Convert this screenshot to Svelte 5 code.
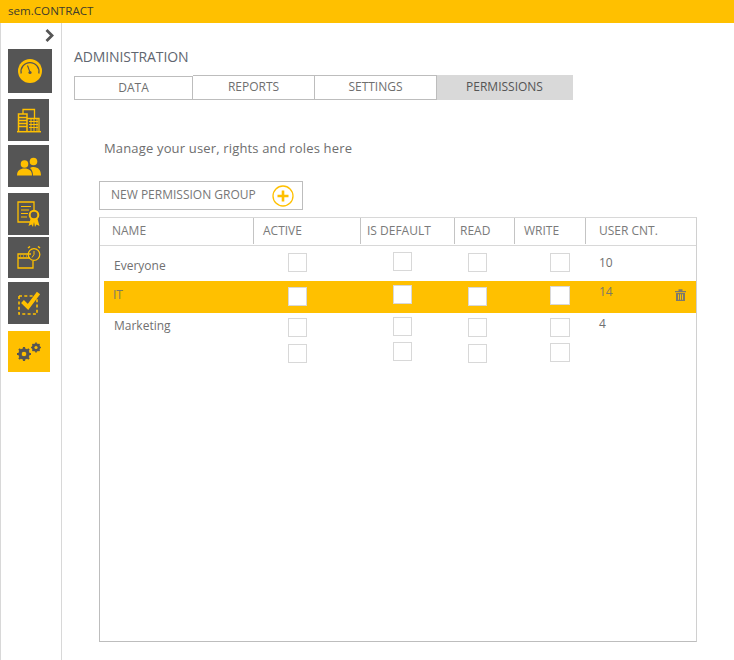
<script>
  const rows = [
    { name: 'Everyone', count: '10', cls: 'r1' },
    { name: 'IT', count: '14', cls: 'r2 selected' },
    { name: 'Marketing', count: '4', cls: 'r3' },
    { name: '', count: '', cls: 'r4' },
  ];
  const heads = ['NAME', 'ACTIVE', 'IS DEFAULT', 'READ', 'WRITE', 'USER CNT.'];
  const tabs = ['DATA', 'REPORTS', 'SETTINGS', 'PERMISSIONS'];
</script>

<div class="topbar">sem.CONTRACT</div>
<div class="page">
  <nav class="side">
    <svg class="chevron" width="10" height="13" viewBox="0 0 10 13"><path d="M1.5 1l5.500 5.500L1.500 12" fill="none" stroke="#555" stroke-width="2.800"/></svg>

    <div class="tile t1">
      <svg width="24" height="24" viewBox="0 0 24 24">
        <circle cx="12" cy="12" r="12" fill="#ffc000"/>
        <path d="M3.200 14.500a9 9 0 1 1 17.600 0" fill="none" stroke="#555" stroke-width="1.300"/>
        <path d="M9.500 6.500l2.400 6.500" stroke="#555" stroke-width="1.100"/>
        <circle cx="12" cy="13.500" r="1.600" fill="#555"/>
      </svg>
    </div>

    <div class="tile t2">
      <svg width="24" height="25" viewBox="0 0 24 25" fill="none" stroke="#ffc000" stroke-width="1.300">
        <path d="M1.500 23V6h8.500v17M1.500 9.500H10M1.500 12.500H10M1.500 15.500H10M1.500 18.500H10" stroke-width="1.500"/>
        <path d="M10 10.500h12v12.500"/>
        <path d="M12 13.500h9M12 16.500h9M12 19.500h9M14 11v12M17 11v12M20 11v12" stroke-width="1"/>
        <path d="M6 6V1.500h11.500v9"/>
        <path d="M0 23.700h24" stroke-width="1.500"/>
      </svg>
    </div>

    <div class="tile t3">
      <svg width="24" height="19" viewBox="0 0 24 19" fill="#ffc000">
        <circle cx="7.500" cy="7" r="3.800"/>
        <circle cx="16.500" cy="4.500" r="3.800"/>
        <path d="M0 18.500c0-5 3-7 7.500-7s7.500 2 7.500 7z"/>
        <path d="M16 18.500h8c0-5-2.500-8.500-7.500-8.500-1.500 0-3 .5-3.500 1 1.800 1.500 3 4 3 7.500z"/>
      </svg>
    </div>

    <div class="tile t4">
      <svg width="24" height="27" viewBox="0 0 24 27" fill="none" stroke="#ffc000" stroke-width="1.300">
        <path d="M14 21H1V1h16v9"/>
        <path d="M4 5.500h10M4 9h8M4 12.500h7M4 16h6" stroke-width="1.100"/>
        <circle cx="17" cy="14" r="4.300" stroke-width="2"/>
        <path d="M13.500 18l-2 7 3-1.500 1.500 2.500 1-5 1 5 1.500-2.500 3 1.500-2-7z" fill="#ffc000" stroke="none"/>
      </svg>
    </div>

    <div class="tile t5">
      <svg width="24" height="24" viewBox="0 0 24 24" fill="none" stroke="#ffc000" stroke-width="1.300">
        <path d="M14 8H1v14h15v-7"/>
        <path d="M1 12h12" stroke-width="1.600"/>
        <path d="M3 10h1M6 10h1M9 10h1" stroke-width="1.200"/>
        <circle cx="17" cy="8.500" r="5.800"/>
        <path d="M17 5v3.500l-2 3" stroke-width="1"/>
        <path d="M11 2l2-1.500M23 2l-2-1.500" stroke-width="1.500"/>
      </svg>
    </div>

    <div class="tile t6">
      <svg width="24" height="24" viewBox="0 0 24 24" fill="none">
        <path d="M2 5h18v18H2z" stroke="#ffc000" stroke-width="1.600" stroke-dasharray="3 2.300"/>
        <path d="M5.500 10.500l5.500 5.500L21.500 2" stroke="#ffc000" stroke-width="4"/>
      </svg>
    </div>

    <div class="tile t7">
      <svg width="26" height="20" viewBox="0 0 26 20">
        <g fill="none" stroke="#555">
          <circle cx="8" cy="12" r="4.300" stroke-width="2.800"/>
          <path d="M8 5v14M1 12h14M3 7l10 10M13 7L3 17" stroke-width="2.200"/>
          <circle cx="20" cy="5.500" r="3" stroke-width="2.200"/>
          <path d="M20 .5v10M15 5.500h10M16.500 2l7 7M23.500 2l-7 7" stroke-width="1.600"/>
        </g>
        <circle cx="8" cy="12" r="2.300" fill="#ffc000"/>
        <circle cx="20" cy="5.500" r="1.600" fill="#ffc000"/>
      </svg>
    </div>
  </nav>

  <main class="content">
    <h1>ADMINISTRATION</h1>
    <div class="tabs">
      {#each tabs as tab, i}
        <div class="tab tab{i}" class:active={i === 3}>{tab}</div>
      {/each}
    </div>

    <p class="intro">Manage your user, rights and roles here</p>

    <button class="newgroup">
      <span>NEW PERMISSION GROUP</span>
      <svg width="22" height="22" viewBox="0 0 22 22">
        <circle cx="11" cy="11" r="10" fill="#fff" stroke="#ffc000" stroke-width="1.300"/>
        <path d="M11 5.500v11M5.500 11h11" stroke="#ffc000" stroke-width="2.600"/>
      </svg>
    </button>

    <div class="table">
      <div class="thead">
        {#each heads as h}
          <div class="th">{h}</div>
        {/each}
      </div>
      {#each rows as row}
        <div class="row {row.cls}">
          <div class="name">{row.name}</div>
          <div class="cell"><span class="box"></span></div>
          <div class="cell"><span class="box"></span></div>
          <div class="cell"><span class="box"></span></div>
          <div class="cell"><span class="box"></span></div>
          <div class="count">{row.count}</div>
          {#if row.name === 'IT'}
            <svg class="trash" width="11" height="12" viewBox="0 0 11 12" fill="#7f7a6a">
              <path d="M0 2h11v1.300H0zM3.500.3h4V2h-4z"/>
              <path fill-rule="evenodd" d="M1 4h9v8H1zM3 5.200v5.600h1V5.200zM5 5.200v5.600h1V5.200zM7 5.200v5.600h1V5.200z"/>
            </svg>
          {/if}
        </div>
      {/each}
    </div>
  </main>
</div>

<style>
  :global(body) {
    margin: 0;
    background: #fff;
    font-family: "Open Sans", "Liberation Sans", sans-serif;
    color: #6b6b6b;
  }
  .topbar {
    height: 23px;
    background: #ffc000;
    color: #403c2c;
    font-size: 11.6px;
    line-height: 22px;
    padding-left: 8px;
  }
  .page {
    display: flex;
    height: 637px;
  }
  .side {
    box-sizing: border-box;
    width: 62px;
    flex-shrink: 0;
    border-left: 1px solid #d8d8d8;
    border-right: 1px solid #d8d8d8;
    padding: 6px 0 0 7px;
    display: flex;
    flex-direction: column;
    align-items: flex-start;
  }
  .chevron { margin: 0 0 7px 37px; height: 13px; }
  .tile {
    background: #555;
    display: flex;
    align-items: center;
    justify-content: center;
    width: 41px;
    height: 42px;
  }
  .t1 { width: 44px; height: 44px; }
  .t2 { margin-top: 6px; }
  .t3 { margin-top: 4px; }
  .t4 { margin-top: 6px; }
  .t5 { margin-top: 2px; height: 41px; }
  .t6 { margin-top: 4px; }
  .t7 { margin-top: 7px; width: 42px; height: 41px; background: #ffc000; }

  .content { padding-left: 12px; flex: 1; min-width: 0; }
  h1 {
    margin: 0;
    padding-top: 23px;
    font-size: 14px;
    font-weight: 400;
    line-height: 21px;
    color: #5f6670;
    letter-spacing: -0.1px;
  }
  .tabs { display: flex; margin-top: 8px; align-items: flex-end; }
  .tab {
    box-sizing: border-box;
    height: 25px;
    border: 1px solid #bdbdbd;
    border-left-width: 0;
    font-size: 12px;
    line-height: 22px;
    text-align: center;
    color: #6f6f6f;
    background: #fff;
  }
  .tab0 { width: 119px; height: 24px; border-left-width: 1px; }
  .tab1 { width: 122px; }
  .tab2 { width: 122px; }
  .tab3 { width: 136px; }
  .tab.active { background: #d9d9d9; border-color: #d9d9d9; color: #555; }

  .intro {
    margin: 38px 0 0 30px;
    font-size: 13px;
    line-height: 20px;
    color: #6e6e6e;
    letter-spacing: 0.16px;
  }
  .newgroup {
    box-sizing: border-box;
    display: flex;
    align-items: center;
    justify-content: space-between;
    width: 204px;
    height: 29px;
    margin: 23px 0 0 25px;
    padding: 0 8px 0 11px;
    background: #fff;
    border: 1px solid #bdbdbd;
    font-family: inherit;
    font-size: 12px;
    color: #777;
  }
  .newgroup span { margin-top: -2px; }
  .table {
    box-sizing: border-box;
    width: 598px;
    height: 425px;
    margin: 7px 0 0 25px;
    border: 1px solid #bdbdbd;
    border-top-color: #d8d8d8;
    border-right-color: #d0d0d0;
  }
  .thead {
    display: grid;
    grid-template-columns: 154px 107px 94px 60px 71px 1fr;
    height: 28px;
    border-bottom: 1px solid #d8d8d8;
    box-sizing: border-box;
  }
  .th {
    box-sizing: border-box;
    padding-left: 12px;
    font-size: 12px;
    line-height: 26px;
    color: #7a7a7a;
    border-right: 1px solid #c4c4c4;
    height: 26px;
  }
  .th:nth-child(2) { padding-left: 9px; }
  .th:nth-child(3) { padding-left: 6px; }
  .th:nth-child(4) { padding-left: 5px; }
  .th:nth-child(5) { padding-left: 9px; }
  .th:nth-child(6) { padding-left: 13px; border-right: 0; }

  .row {
    position: relative;
    display: grid;
    grid-template-columns: 154px 107px 94px 60px 71px 1fr;
    margin-left: 4px;
    box-sizing: border-box;
    font-size: 12px;
    color: #707070;
  }
  .r1 { height: 35px; padding-top: 7px; }
  .r2 { height: 32px; padding-top: 6px; background: #ffc000; color: #7d7a66; }
  .r3 { height: 27px; padding-top: 5px; }
  .r4 { height: 26px; padding-top: 4px; }
  .name, .count { line-height: 18px; }
  .name { padding-left: 10px; margin-top: 4px; }
  .r2 .name { margin-top: -1px; padding-left: 9px; }
  .r3 .name { margin-top: -1px; }
  .count { padding-left: 9px; margin-top: 1px; }
  .r2 .count { margin-top: -4px; }
  .r3 .count { margin-top: -3px; }
  .box {
    display: block;
    box-sizing: border-box;
    width: 19px;
    height: 19px;
    border: 1px solid #d8d8d8;
    background: #fff;
  }
  .cell:nth-child(2) .box { margin-left: 30px; }
  .cell:nth-child(3) .box { margin-left: 28px; margin-top: -1px; }
  .cell:nth-child(4) .box { margin-left: 9px; }
  .cell:nth-child(5) .box { margin-left: 31px; width: 20px; }
  .r2 .cell:nth-child(3) .box { margin-top: -2px; }
  .r2 .cell:nth-child(5) .box { margin-top: -1px; }
  .r4 .cell:nth-child(3) .box { margin-top: -2px; }
  .r4 .cell:nth-child(5) .box { margin-top: -1px; }
  .trash { position: absolute; right: 10px; top: 8px; }
</style>
